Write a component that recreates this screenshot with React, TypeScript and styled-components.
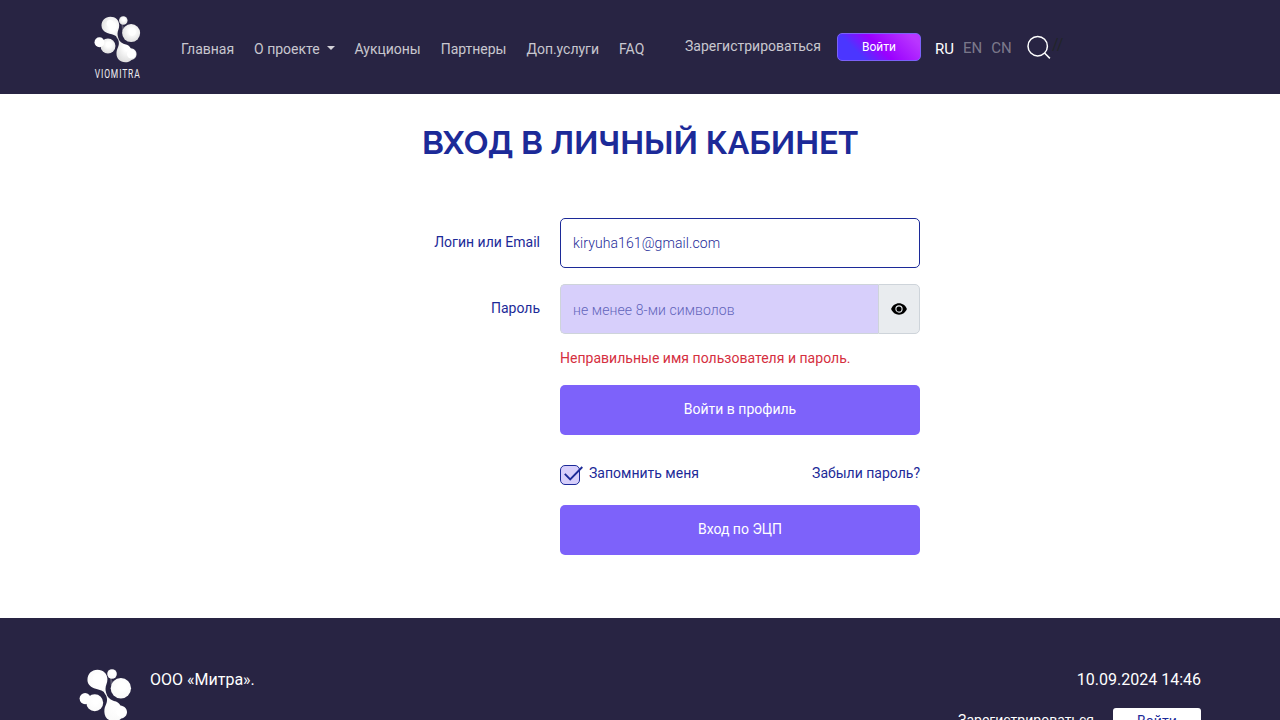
import React from 'react';
import styled, { createGlobalStyle } from 'styled-components';

const Global = createGlobalStyle`
  *, *::before, *::after { box-sizing: border-box; }
  html, body { margin: 0; height: 720px; overflow: hidden; }
  body { background: #fff; font-family: Roboto, sans-serif; font-size: 14px; color: #1c2a98; }
  a { color: inherit; text-decoration: none; }
  button, input { font: inherit; }
`;

const Page = styled.div`
  height: 720px;
  overflow: hidden;
`;

const Header = styled.header`
  display: flex;
  align-items: flex-start;
  height: 94px;
  padding-left: 94px;
  background: #282443;
`;

const Brand = styled.a`
  display: flex;
  flex-direction: column;
  align-items: center;
  width: 47px;
  padding-top: 15px;
`;

const Nav = styled.nav`
  display: flex;
  gap: 20px;
  width: 464px;
  margin-left: 40px;
  padding-top: 39px;
  line-height: 21px;
`;

const NavLink = styled.a`
  display: flex;
  align-items: center;
  color: rgba(255, 255, 255, 0.75);
  font-weight: 450;
  letter-spacing: -0.02px;
  white-space: nowrap;
`;

const Caret = styled.span`
  margin-left: 7px;
  margin-bottom: 3px;
  border: 4px solid transparent;
  border-top-color: rgba(255, 255, 255, 0.8);
  border-bottom: 0;
`;

const RegisterLink = styled(NavLink)`
  width: 137px;
  margin: 36px 15px 0 40px;
  letter-spacing: 0;
  line-height: 21px;
`;

const EnterButton = styled.button`
  width: 84px;
  height: 28px;
  margin-top: 33px;
  padding: 0;
  border: 1px solid #7b61f8;
  border-radius: 5px;
  background: linear-gradient(45deg, #4b36ff 25%, #9a00ff 50%, #b936ff 90%);
  color: #fff;
  font-size: 12px;
  font-weight: 450;
`;

const Langs = styled.div`
  display: flex;
  gap: 9px;
  width: 78px;
  margin: 38px 0 0 14px;
  line-height: 20px;
`;

const Lang = styled.a<{ $active?: boolean }>`
  padding-top: ${(p) => (p.$active ? '1px' : '0')};
  color: ${(p) => (p.$active ? '#fff' : 'rgba(255, 255, 255, 0.4)')};
  font-size: 15px;
  font-weight: 450;
`;

const SearchIcon = styled.svg`
  width: 24px;
  height: 24px;
  margin: 35px 0 0 14px;
`;

const Slashes = styled.span`
  margin: 35px 0 0 1px;
  color: #212529;
  font-size: 16px;
  line-height: 20px;
`;

const Main = styled.main`
  display: flex;
  flex-direction: column;
  align-items: center;
  height: 524px;
  padding-top: 29px;
`;

const Title = styled.h1`
  margin: 0;
  font-family: Raleway, Lato, sans-serif;
  font-size: 32px;
  font-weight: 700;
  line-height: 40px;
  white-space: nowrap;
`;

const Form = styled.div`
  display: flex;
  flex-direction: column;
  width: 560px;
  margin: 55px 0 0;
`;

const Row = styled.div`
  display: grid;
  grid-template-columns: 180px 360px;
  column-gap: 20px;
  margin-bottom: 16px;
`;

const Label = styled.label`
  padding-top: 14px;
  font-weight: 450;
  line-height: 21px;
  text-align: right;
`;

const Input = styled.input`
  width: 100%;
  min-width: 0;
  height: 50px;
  padding: 0 12px;
  border: 1px solid #1c2a98;
  border-radius: 5px;
  outline: none;
  background: #fff;
  color: #1c2a98;
  font-weight: 300;
  letter-spacing: 0.1px;
`;

const Group = styled.div`
  display: flex;
`;

const PasswordInput = styled(Input)`
  flex: 1;
  padding-top: 2px;
  border-color: #ced4da;
  border-right: 0;
  border-radius: 5px 0 0 5px;
  background: #d7cffb;
  &::placeholder { color: #1c2a98; opacity: 0.65; }
`;

const EyeButton = styled.button`
  display: flex;
  align-items: center;
  justify-content: center;
  width: 42px;
  height: 50px;
  padding: 0;
  border: 1px solid #ced4da;
  border-radius: 0 5px 5px 0;
  background: #e9ecef;
`;

const Actions = styled.div`
  width: 360px;
  margin-left: 200px;
`;

const ErrorText = styled.p`
  margin: -3px 0 16px;
  color: #d52f3f;
  font-weight: 450;
  letter-spacing: 0.02px;
  line-height: 22px;
  white-space: nowrap;
`;

const Submit = styled.button`
  display: block;
  width: 360px;
  height: 50px;
  padding: 0 0 2px;
  border: 0;
  border-radius: 5px;
  background: #7d62fa;
  color: #fff;
  font-weight: 450;
`;

const Options = styled.div`
  display: flex;
  justify-content: space-between;
  height: 70px;
  padding-top: 28px;
  line-height: 21px;
`;

const Remember = styled.label`
  display: flex;
  gap: 5px;
`;

const CheckIcon = styled.svg`
  width: 24px;
  height: 22px;
  margin-top: 1px;
`;

const Footer = styled.footer`
  display: flex;
  align-items: flex-start;
  height: 102px;
  padding: 50px 79px 0;
  background: #282443;
  color: #fff;
`;

const MoleculeSvg = styled.svg`
  flex: none;
  margin-top: 1px;
`;

const Company = styled.div`
  margin: 0 auto 0 18px;
  font-size: 16px;
  line-height: 24px;
`;

const FooterRight = styled.div`
  display: flex;
  flex-direction: column;
  align-items: flex-end;
`;

const Stamp = styled.div`
  font-size: 16px;
  line-height: 24px;
`;

const FooterActions = styled.div`
  display: flex;
  gap: 19px;
  margin-top: 16px;
  font-weight: 450;
  line-height: 24px;
`;

const FooterEnter = styled.a`
  width: 88px;
  height: 30px;
  padding-top: 1px;
  border-radius: 3px;
  background: #fff;
  color: #1c2a98;
  font-weight: 400;
  letter-spacing: 0.1px;
  line-height: 25px;
  text-align: center;
`;

function Molecule({ width, id, shade }: { width: number; id: string; shade: number }) {
  const fill = `url(#${id})`;
  const edge = 255 - shade;
  return (
    <MoleculeSvg width={width} height={width} viewBox="42 50 138 138">
      <defs>
        <radialGradient id={id} cx="0.55" cy="0.4" r="0.65">
          <stop offset="0.25" stopColor="#fff" />
          <stop offset="1" stopColor={`rgb(${edge},${edge},${edge})`} />
        </radialGradient>
      </defs>
      <path fill={fill} d="M90 52c15 0 26 10 26 25 0 11-5 16-5 25 0 12 4 20 12 27-9-6-10-15-17-20-7-6-16-5-25-9C70 96 64 88 64 78c0-15 11-26 26-26z" />
      <circle fill={fill} cx="128" cy="63" r="12.5" />
      <circle fill={fill} cx="151" cy="100" r="26.5" />
      <path fill={fill} d="M127 73c0 5 1 9 5 12l-7 9c-1-8-2-14-2-20z" opacity=".25" />
      <circle fill={fill} cx="83" cy="138" r="22" />
      <circle fill="#fff" cx="58" cy="127" r="14.5" />
      <path fill={fill} d="M112 108c1 14 9 21 21 25 8 2 13 4 17 12 9 1 17 7 17 17 0 9-6 15-15 17-5 5-11 7-18 7-16 0-26-11-26-25 0-16 7-19 7-31 0-8-3-13-8-19z" />
      <g fill="#fff">
        <circle cx="89" cy="72" r="10" />
        <circle cx="154" cy="98" r="10" />
        <circle cx="152" cy="162" r="13" />
      </g>
    </MoleculeSvg>
  );
}

export default function App() {
  return (
    <Page>
      <Global />
      <Header>
        <Brand href="#">
          <Molecule width={47} id="logo-top" shade={36} />
          <svg width="47" height="18" viewBox="0 0 47 18">
            <g transform="scale(0.68 1)">
              <text x="1.2" y="15" fill="#eeeef2" fontFamily="Roboto, sans-serif" fontSize="12.500" textLength="66" lengthAdjust="spacing">VIOMITRA</text>
            </g>
          </svg>
        </Brand>
        <Nav>
          <NavLink href="#">Главная</NavLink>
          <NavLink href="#">О проекте<Caret /></NavLink>
          <NavLink href="#">Аукционы</NavLink>
          <NavLink href="#">Партнеры</NavLink>
          <NavLink href="#">Доп.услуги</NavLink>
          <NavLink href="#">FAQ</NavLink>
        </Nav>
        <RegisterLink href="#">Зарегистрироваться</RegisterLink>
        <EnterButton>Войти</EnterButton>
        <Langs>
          <Lang $active href="#">RU</Lang>
          <Lang href="#">EN</Lang>
          <Lang href="#">CN</Lang>
        </Langs>
        <SearchIcon viewBox="0 0 24 24" fill="none" stroke="#fff" strokeWidth="1.5">
          <circle cx="10.700" cy="11.200" r="9.700" />
          <path d="M17.500 18 22.900 23.400" />
        </SearchIcon>
        <Slashes>//</Slashes>
      </Header>
      <Main>
        <Title>ВХОД В ЛИЧНЫЙ КАБИНЕТ</Title>
        <Form>
          <Row>
            <Label>Логин или Email</Label>
            <Input defaultValue="kiryuha161@gmail.com" />
          </Row>
          <Row>
            <Label>Пароль</Label>
            <Group>
              <PasswordInput type="password" placeholder="не менее 8-ми символов" />
              <EyeButton>
                <svg width="16" height="12" viewBox="0 0 16 12">
                  <path d="M8 .3C4.5.3 1.500 2.500.1 6 1.500 9.500 4.500 11.700 8 11.700S14.500 9.500 15.900 6C14.500 2.500 11.500.3 8 .3z" />
                  <circle cx="8" cy="6" r="3.1" fill="none" stroke="#e9ecef" strokeWidth="1.1" />
                </svg>
              </EyeButton>
            </Group>
          </Row>
          <Actions>
            <ErrorText>Неправильные имя пользователя и пароль.</ErrorText>
            <Submit>Войти в профиль</Submit>
            <Options>
              <Remember>
                <CheckIcon viewBox="0 0 24 22" fill="none" stroke="#1c2a98">
                  <rect x=".5" y="1.500" width="19" height="19" rx="4.500" fill="#d7cffb" />
                  <path d="M4.800 9.800 10.200 15.300 22.300 3" strokeWidth="1.900" />
                </CheckIcon>
                Запомнить меня
              </Remember>
              <a href="#">Забыли пароль?</a>
            </Options>
            <Submit>Вход по ЭЦП</Submit>
          </Actions>
        </Form>
      </Main>
      <Footer>
        <Molecule width={53} id="logo-bottom" shade={6} />
        <Company>ООО «Митра».</Company>
        <FooterRight>
          <Stamp>10.09.2024 14:46</Stamp>
          <FooterActions>
            <a href="#">Зарегистрироваться</a>
            <FooterEnter href="#">Войти</FooterEnter>
          </FooterActions>
        </FooterRight>
      </Footer>
    </Page>
  );
}
